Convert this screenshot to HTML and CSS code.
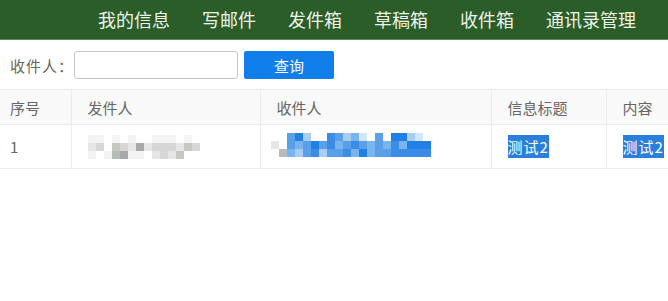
FILE: index.html
```html
<!DOCTYPE html>
<html lang="zh-CN">
<head>
    <meta charset="UTF-8">
    <meta name="viewport" content="width=device-width, initial-scale=1.0">
    <title>收件箱</title>
    <link rel="stylesheet" href="styles.css">
</head>
<body>
    <div class="nav">
        <a class="nav-item">我的信息</a>
        <a class="nav-item">写邮件</a>
        <a class="nav-item">发件箱</a>
        <a class="nav-item">草稿箱</a>
        <a class="nav-item">收件箱</a>
        <a class="nav-item">通讯录管理</a>
        <a class="nav-item">退出</a>
    </div>

    <div class="search">
        <label class="search-label">收件人：</label>
        <input class="search-input" type="text">
        <button class="search-btn">查询</button>
    </div>

    <table class="list">
        <colgroup>
            <col class="col-no">
            <col class="col-from">
            <col class="col-to">
            <col class="col-title">
            <col class="col-content">
        </colgroup>
        <thead>
            <tr>
                <th class="first">序号</th>
                <th>发件人</th>
                <th>收件人</th>
                <th>信息标题</th>
                <th>内容</th>
            </tr>
        </thead>
        <tbody>
            <tr>
                <td class="first">1</td>
                <td>
                    <!-- blurred sender address -->
                    <div class="mosaic mosaic-from">
                        <span class="g1"></span><span class="g1"></span><span></span><span class="g1"></span><span></span><span class="g1"></span><span></span><span></span><span class="g1"></span><span class="g1"></span><span class="g1"></span><span></span><span class="g1"></span><span></span><span></span>
                        <span class="g2"></span><span class="g3"></span><span></span><span class="g4"></span><span class="g3"></span><span class="g2"></span><span class="g6"></span><span class="g2"></span><span class="g3"></span><span class="g3"></span><span class="g3"></span><span class="g2"></span><span class="g4"></span><span class="g3"></span><span></span>
                        <span class="g1"></span><span></span><span class="g1"></span><span class="g5"></span><span class="g6"></span><span class="g1"></span><span class="g1"></span><span></span><span class="g2"></span><span class="g3"></span><span class="g2"></span><span class="g4"></span><span></span><span></span><span></span>
                    </div>
                </td>
                <td class="to">
                    <!-- blurred recipient address -->
                    <div class="mosaic mosaic-to">
                        <span></span><span></span><span class="b4"></span><span class="b6"></span><span class="b2"></span><span></span><span></span><span class="b5"></span><span class="b4"></span><span class="b2"></span><span class="b3"></span><span class="b1"></span><span></span><span class="b4"></span><span></span><span class="b6"></span><span class="b6"></span><span class="b2"></span><span class="b1"></span><span></span>
                        <span class="g2"></span><span></span><span class="b4"></span><span class="b3"></span><span class="b4"></span><span class="b6"></span><span class="b4"></span><span class="b5"></span><span class="b3"></span><span class="b4"></span><span class="b5"></span><span class="b4"></span><span class="b3"></span><span class="b4"></span><span class="b3"></span><span class="b5"></span><span class="b3"></span><span class="b6"></span><span class="b6"></span><span class="b6"></span>
                        <span></span><span class="g5"></span><span class="b3"></span><span class="b2"></span><span class="b4"></span><span class="b5"></span><span class="b2"></span><span class="b4"></span><span class="b4"></span><span class="b5"></span><span class="b3"></span><span class="b6"></span><span class="b3"></span><span class="b4"></span><span class="b4"></span><span class="b5"></span><span class="b5"></span><span class="b5"></span><span class="b5"></span><span class="b5"></span>
                    </div>
                </td>
                <td><span class="sel">测试2</span></td>
                <td><span class="sel">测试2</span></td>
            </tr>
        </tbody>
    </table>
</body>
</html>
```

FILE: styles.css
```css
body {
    margin: 0;
    font-family: "Noto Sans CJK SC", "Noto Sans", sans-serif;
    background: #fff;
    overflow: hidden;
}
.nav {
    display: flex;
    height: 39px;
    align-items: center;
    padding-left: 82px;
    background: #2a5d27;
    border-bottom: 1px solid #5c8a58;
    white-space: nowrap;
    overflow: hidden;
}
.nav-item {
    padding: 0 16px;
    font-size: 18px;
    color: #eef3ec;
    line-height: 39px;
}
.search {
    display: flex;
    align-items: center;
    height: 49px;
    padding-left: 10px;
    padding-top: 1px;
    box-sizing: border-box;
}
.search-label {
    font-size: 15px;
    letter-spacing: 1px;
    color: #666;
}
.search-input {
    width: 164px;
    height: 28px;
    box-sizing: border-box;
    margin: 0;
    border: 1px solid #c6c6c6;
    border-radius: 3px;
    outline: none;
}
.search-btn {
    width: 90px;
    height: 28px;
    margin-left: 6px;
    border: none;
    border-radius: 2px;
    background: #107ee8;
    color: #fff;
    font-family: inherit;
    font-size: 15px;
    padding: 0;
}
.list {
    width: 720px;
    table-layout: fixed;
    border-collapse: collapse;
    font-size: 15px;
    color: #666;
}
.col-no { width: 71px; }
.col-from { width: 189px; }
.col-to { width: 231px; }
.col-title { width: 115px; }
.col-content { width: 114px; }
.list th,
.list td {
    border: 1px solid #ebebeb;
    padding: 0 16px;
    text-align: left;
    font-weight: normal;
    white-space: nowrap;
    overflow: hidden;
}
.list th {
    height: 34px;
    background: #f9f9f9;
}
.list td {
    height: 43px;
    background: #fff;
}
.list .first {
    border-left: none;
    padding-left: 10px;
}
.list td.to {
    padding-left: 10px;
}
.mosaic {
    display: grid;
    grid-auto-rows: 8px;
}
.mosaic-from {
    grid-template-columns: repeat(15, 8px);
    margin-top: 1px;
}
.mosaic-to {
    grid-template-columns: repeat(20, 8px);
    margin-top: -3px;
}
.g1 { background: #f3f3f3; }
.g2 { background: #e6e6e6; }
.g3 { background: #d6d6d4; }
.g4 { background: #c8c6c0; }
.g5 { background: #b8bbbb; }
.g6 { background: #a9a9a9; }
.b1 { background: #d2e6f9; }
.b2 { background: #a8ccf2; }
.b3 { background: #7ab4ec; }
.b4 { background: #5aa0e8; }
.b5 { background: #3a8ce6; }
.b6 { background: #2080e6; }
.sel {
    background: #2a7fdc;
    color: #fff;
    padding: 1px 0;
    letter-spacing: 1px;
}
```
